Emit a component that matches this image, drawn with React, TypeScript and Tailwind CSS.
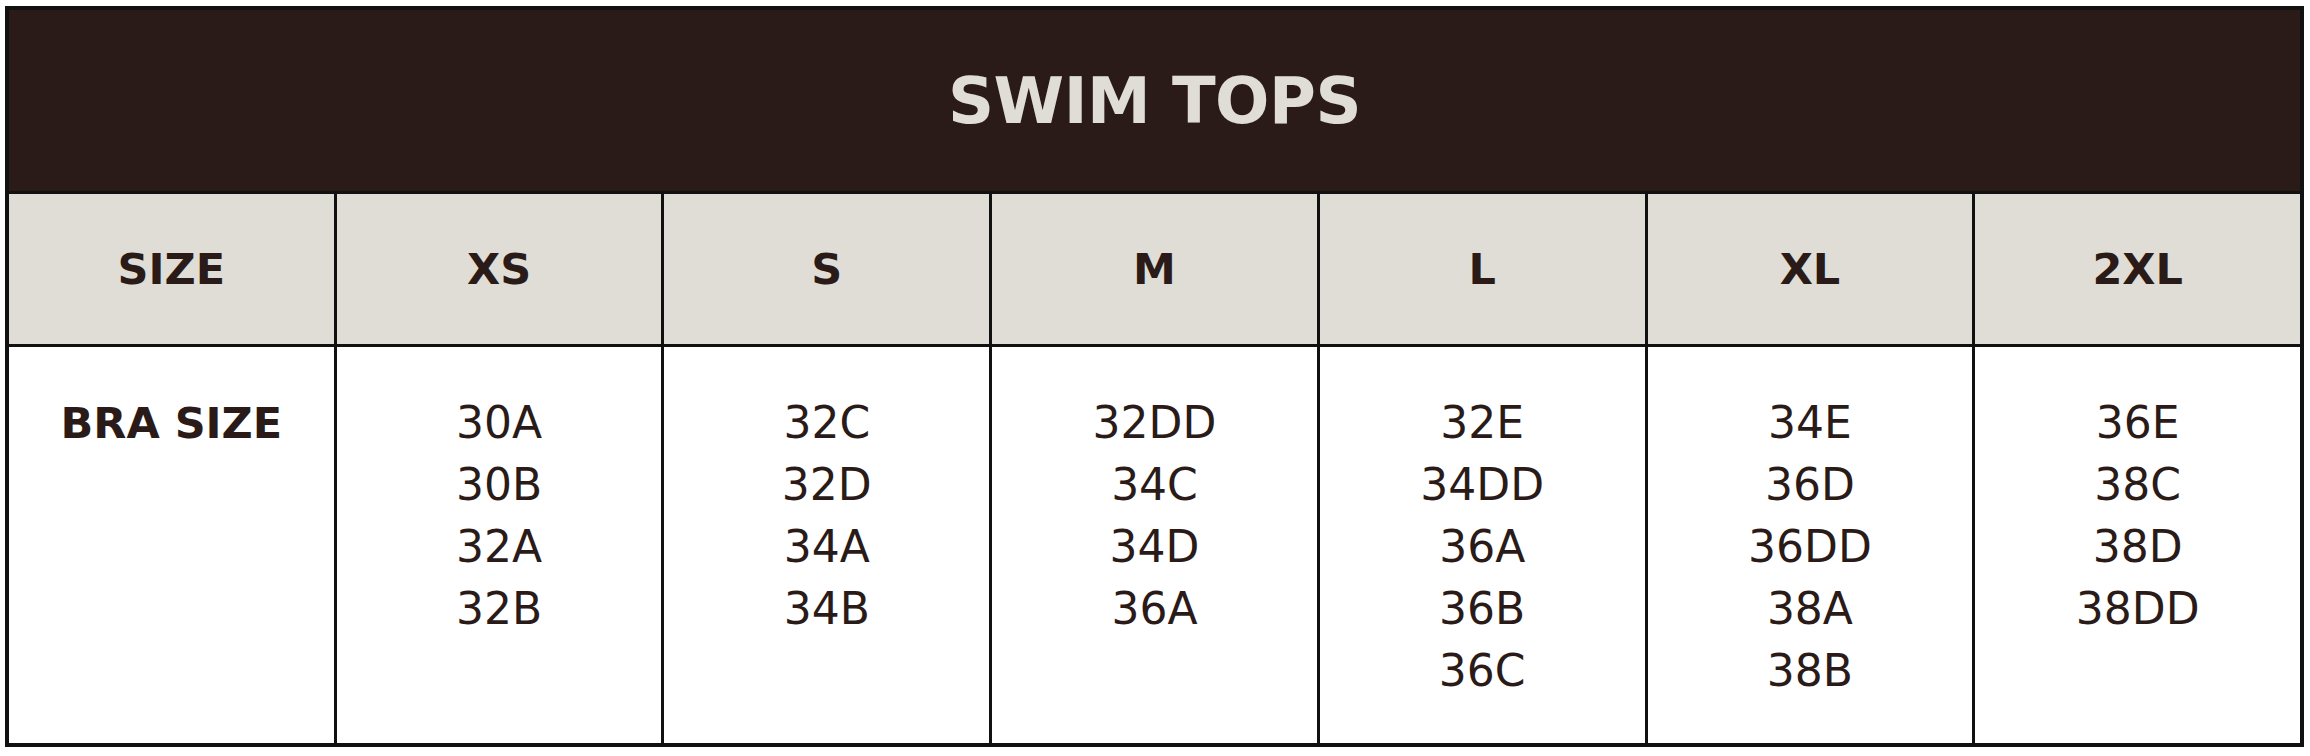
const sizes = ["XS", "S", "M", "L", "XL", "2XL"];

const braSizes: string[][] = [
  ["30A", "30B", "32A", "32B"],
  ["32C", "32D", "34A", "34B"],
  ["32DD", "34C", "34D", "36A"],
  ["32E", "34DD", "36A", "36B", "36C"],
  ["34E", "36D", "36DD", "38A", "38B"],
  ["36E", "38C", "38D", "38DD"],
];

export default function App() {
  return (
    <div className="bg-white w-[2310px] h-[756px] pt-[6px] pl-[5px] font-['DejaVu_Sans',sans-serif] text-[#2a1b18]">
      <div className="w-[2299px] border-[4px] border-[#111] bg-[#111] grid grid-cols-7 grid-rows-[181px_150px_396px] gap-[3px]">
        <div className="col-span-7 bg-[#2a1b18] flex items-center justify-center">
          <h1 className="text-[64px] font-bold text-[#e0ddd6] tracking-[-0.5px] leading-none">SWIM TOPS</h1>
        </div>

        <div className="bg-[#e0ddd6] flex items-center justify-center text-[43px] font-bold">SIZE</div>
        {sizes.map((s) => (
          <div key={s} className="bg-[#e0ddd6] flex items-center justify-center text-[43px] font-bold">
            {s}
          </div>
        ))}

        <div className="bg-white pt-[45px] text-center text-[43px] leading-[62px] font-bold">BRA SIZE</div>
        {braSizes.map((list, i) => (
          <div key={i} className="bg-white pt-[45px] flex flex-col items-center text-[44px] leading-[62px]">
            {list.map((b) => (
              <span key={b}>{b}</span>
            ))}
          </div>
        ))}
      </div>
    </div>
  );
}
